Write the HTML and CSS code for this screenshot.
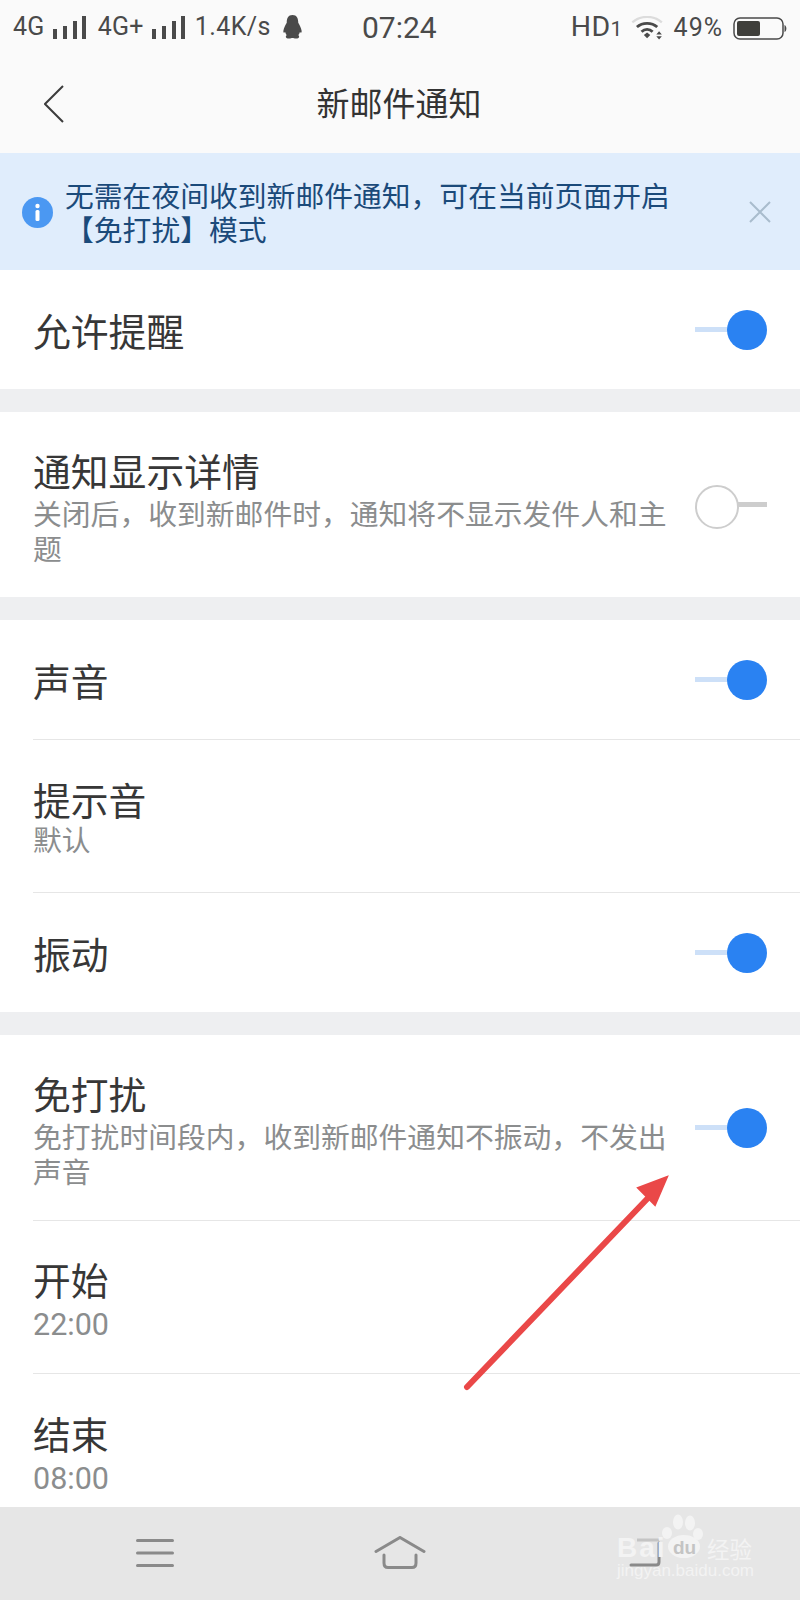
FILE: index.html
```html
<!DOCTYPE html>
<html lang="zh-CN">
<head>
    <meta charset="UTF-8">
    <title>新邮件通知</title>
    <link rel="stylesheet" href="styles.css">
</head>
<body>
<div class="phone">
    <!-- status bar -->
    <div class="status">
        <div class="status-left">
            <span class="net">4G</span>
            <svg class="bars" width="34" height="23" viewBox="0 0 34 23"><path d="M2 13v10M12 10v13M22 5v18M31 0v23" stroke="#4a4a4a" stroke-width="4"/></svg>
            <span class="net net2">4G+</span>
            <svg class="bars" width="34" height="23" viewBox="0 0 34 23"><path d="M2 13v10M12 10v13M22 5v18M31 0v23" stroke="#4a4a4a" stroke-width="4"/></svg>
            <span class="speed">1.4K/s</span>
            <svg class="qq" width="21" height="24" viewBox="0 0 21 25"><path d="M10.500 0C6 0 4.500 3.500 4.500 8C3.500 10 1.500 13 1 16.500C.8 18.500 1.500 19 2.800 17.800C3.200 19.300 3.800 20.300 4.500 21C3 21.800 3 24.500 7 24.500C8.500 24.500 9.500 24 10.500 24C11.500 24 12.500 24.500 14 24.500C18 24.500 18 21.800 16.500 21C17.200 20.300 17.800 19.300 18.200 17.800C19.500 19 20.200 18.500 20 16.500C19.500 13 17.500 10 16.500 8C16.500 3.500 15 0 10.500 0Z" fill="#4a4a4a"/></svg>
        </div>
        <div class="clock">07:24</div>
        <div class="status-right">
            <span class="hd">HD<small>1</small></span>
            <svg class="wifi" width="36" height="24" viewBox="0 0 36 26"><path d="M1 7C10 -1 24 -1 33 7" fill="none" stroke="#dcdcdc" stroke-width="2.500"/><path d="M6 12C12 6.500 22 6.500 28 12M11 17C14.500 13.500 19.500 13.500 23 17" fill="none" stroke="#4a4a4a" stroke-width="3"/><path d="M13.500 20.500L17 18L20.500 20.500L17 24ZM27 20L30 16.500L33 20ZM27 22H33L30 25.500Z" fill="#4a4a4a"/></svg>
            <span class="pct">49%</span>
            <svg class="battery" width="54" height="23" viewBox="0 0 54 23"><rect x="1" y="1" width="49" height="21" rx="6" fill="none" stroke="#4a4a4a" stroke-width="1.500"/><rect x="4" y="4" width="23" height="15" rx="2" fill="#3f3f3b"/><path d="M51.500 8c2.500 1 2.500 6 0 7z" fill="#4a4a4a"/></svg>
        </div>
    </div>

    <!-- title bar -->
    <div class="topbar">
        <svg class="back" width="20" height="38" viewBox="0 0 20 38"><path d="M19 1L1 19L19 37" fill="none" stroke="#3c3c3c" stroke-width="2"/></svg>
        <div class="title">新邮件通知</div>
    </div>

    <div class="banner">
        <svg class="info" width="31" height="31" viewBox="0 0 31 31"><circle cx="15.500" cy="15.500" r="15.500" fill="#4b98f2"/><circle cx="15.500" cy="9" r="2.200" fill="#fff"/><rect x="13.500" y="13" width="4" height="11" rx="1.500" fill="#fff"/></svg>
        <div class="banner-text">无需在夜间收到新邮件通知，可在当前页面开启<br>【免打扰】模式</div>
        <svg class="close" width="22" height="22" viewBox="0 0 22 22"><path d="M1 1L21 21M21 1L1 21" stroke="#a9bccd" stroke-width="2"/></svg>
    </div>

    <div class="group first">
        <div class="row row-plain">
            <div class="label">允许提醒</div>
            <span class="switch on"></span>
        </div>
    </div>

    <div class="group second">
        <div class="row row-detail">
            <div class="row-text">
                <div class="label">通知显示详情</div>
                <div class="sub">关闭后，收到新邮件时，通知将不显示发件人和主题</div>
            </div>
            <span class="switch off"></span>
        </div>
    </div>

    <div class="group">
        <div class="row row-plain line">
            <div class="label">声音</div>
            <span class="switch on"></span>
        </div>
        <div class="row row-value line">
            <div class="row-text">
                <div class="label">提示音</div>
                <div class="sub">默认</div>
            </div>
        </div>
        <div class="row row-plain">
            <div class="label">振动</div>
            <span class="switch on"></span>
        </div>
    </div>

    <div class="group">
        <div class="row row-detail line">
            <div class="row-text">
                <div class="label">免打扰</div>
                <div class="sub">免打扰时间段内，收到新邮件通知不振动，不发出声音</div>
            </div>
            <span class="switch on"></span>
        </div>
        <div class="row row-value row-time line">
            <div class="row-text">
                <div class="label">开始</div>
                <div class="sub time">22:00</div>
            </div>
        </div>
        <div class="row row-value row-time">
            <div class="row-text">
                <div class="label">结束</div>
                <div class="sub time">08:00</div>
            </div>
        </div>
    </div>

    <!-- system navigation -->
    <div class="navbar">
        <svg width="38" height="30" viewBox="0 0 38 30"><path d="M1.500 2.500H36.500M1.500 15H36.500M1.500 27.500H36.500" stroke="#8a8a8a" stroke-width="3" stroke-linecap="round"/></svg>
        <svg width="52" height="34" viewBox="0 0 52 34"><path d="M2 15.500L26 1.500L50 15.500M10 19V27Q10 31.500 14 31.500H38Q42 31.500 42 27V19" fill="none" stroke="#8a8a8a" stroke-width="3" stroke-linecap="round"/></svg>
        <svg width="32" height="30" viewBox="0 0 32 30"><path d="M8 2H30" fill="none" stroke="#c4c4c4" stroke-width="3"/><path d="M30 5V24Q30 27 27 27H2" fill="none" stroke="#8a8a8a" stroke-width="3" stroke-linecap="round"/></svg>
    </div>

    <!-- annotation arrow drawn on the screenshot -->
    <svg class="arrow" width="220" height="230" viewBox="0 0 220 230"><path d="M7 219L188 30" stroke="#ea4848" stroke-width="6" stroke-linecap="round"/><path d="M207 9L178 20L195 37Z" fill="#ea4848" stroke="#ea4848" stroke-width="2"/></svg>

    <!-- watermark -->
    <div class="mark">
        <svg class="paw" width="46" height="50" viewBox="0 0 46 50"><g fill="#f3f3f3"><ellipse cx="7" cy="21" rx="5" ry="6"/><ellipse cx="18" cy="10" rx="5" ry="7.500"/><ellipse cx="30" cy="11" rx="5" ry="7.500"/><ellipse cx="38" cy="22" rx="5" ry="6"/><ellipse cx="24" cy="34.500" rx="16" ry="11.500"/></g></svg>
        <span class="mark-bai">Bai</span>
        <span class="mark-du">du</span>
        <span class="mark-jy">经验</span>
        <span class="mark-url">jingyan.baidu.com</span>
    </div>
</div>
</body>
</html>
```

FILE: styles.css
```css
* {
    box-sizing: border-box;
}
html, body {
    margin: 0;
    padding: 0;
}
body {
    font-family: "Noto Sans CJK SC", "Noto Sans", sans-serif;
    background: #fff;
}
.phone {
    position: relative;
    width: 800px;
    height: 1600px;
    overflow: hidden;
    display: flex;
    flex-direction: column;
    background: #fff;
}

/* status bar */
.status {
    height: 56px;
    flex: none;
    background: #fafafa;
    padding: 12px 13px 0 13px;
    display: flex;
    align-items: flex-start;
    color: #4a4a4a;
    font-family: "Roboto", "Liberation Sans", sans-serif;
    font-size: 25px;
    line-height: 30px;
}
.status-left {
    width: 302px;
    display: flex;
    align-items: center;
}
.net {
    letter-spacing: 0.3px;
}
.status-left .bars {
    margin-left: 8px;
}
.net2 {
    margin-left: 11px;
}
.speed {
    margin-left: 9px;
    letter-spacing: 0.4px;
}
.qq {
    margin-left: 11px;
}
.clock {
    margin-left: 47px;
    font-size: 30px;
    padding-top: 1px;
}
.status-right {
    margin-left: auto;
    display: flex;
    align-items: center;
}
.hd {
    font-size: 28.5px;
    letter-spacing: 0.3px;
}
.hd small {
    font-size: 21px;
}
.wifi {
    margin-left: 7px;
}
.pct {
    margin-left: 8px;
    letter-spacing: 1px;
}
.battery {
    margin-left: 10px;
}

/* title bar */
.topbar {
    height: 97px;
    flex: none;
    background: #fafafa;
    display: flex;
    align-items: center;
    justify-content: center;
    position: relative;
    padding-bottom: 5px;
    padding-right: 2px;
}
.back {
    position: absolute;
    left: 44px;
    top: 29px;
}
.title {
    font-size: 33px;
    line-height: 44px;
    color: #333;
}

/* tip banner */
.banner {
    height: 117px;
    flex: none;
    background: #e0edfc;
    padding: 0 29px 0 22px;
    display: flex;
    align-items: center;
}
.info {
    flex: none;
    margin-top: 2px;
}
.banner-text {
    margin-left: 12px;
    flex: 1;
    font-size: 28.8px;
    line-height: 34px;
    color: #1b4a7a;
}
.close {
    flex: none;
}

/* settings */
.group {
    background: #fff;
    margin-top: 22px;
    padding-left: 33px;
}
.group.first {
    margin-top: 0;
}
.group.second {
    margin-top: 23px;
}
.phone > .group + .group {
    box-shadow: 0 -23px 0 #eeeff1;
}
.row {
    display: flex;
    align-items: center;
    justify-content: space-between;
    padding-right: 33px;
}
.row.line {
    border-bottom: 1px solid #e6e6e6;
}
.row-plain {
    height: 120px;
}
.row-value {
    height: 153px;
}
.row-detail {
    height: 186px;
}
.group.first .row-plain {
    height: 119px;
}
.row-text {
    width: 640px;
}
.row-detail .row-text {
    padding-top: 2px;
}
.row-time .row-text {
    padding-top: 4px;
}
.label {
    font-size: 37.8px;
    line-height: 46px;
    color: #373737;
}
.row-detail .label {
    margin-bottom: 2px;
}
.sub {
    font-size: 28.8px;
    line-height: 34px;
    color: #8b8d8e;
}
.row-detail .sub {
    line-height: 35px;
}
.sub.time {
    font-family: "Roboto", "Liberation Sans", sans-serif;
    font-size: 30.5px;
    padding-top: 6px;
}

/* switches */
.switch {
    position: relative;
    flex: none;
    display: block;
    width: 72px;
    height: 40px;
}
.switch::before {
    content: "";
    position: absolute;
    left: 0;
    right: 10px;
    top: 17px;
    height: 5px;
}
.switch::after {
    content: "";
    position: absolute;
    top: 0;
    width: 40px;
    height: 40px;
    border-radius: 50%;
}
.switch.on::before {
    background: #cde0f8;
}
.switch.on::after {
    right: 0;
    background: #2a82f2;
}
.switch.off::before {
    background: #cdcdcd;
    left: 30px;
    right: 0;
}
.switch.off::after {
    left: 0;
    background: #fff;
    border: 2px solid #cdcdcd;
}

/* bottom navigation */
.navbar {
    position: absolute;
    left: 0;
    right: 0;
    bottom: 0;
    height: 93px;
    padding-bottom: 2px;
    background: #e6e6e6;
    display: grid;
    grid-template-columns: repeat(3, 245px);
    justify-content: center;
    justify-items: center;
    align-items: center;
}

/* overlays */
.arrow {
    position: absolute;
    left: 460px;
    top: 1168px;
}
.mark {
    position: absolute;
    left: 612px;
    top: 1512px;
    width: 146px;
    height: 80px;
    color: #f3f3f3;
    font-family: "Liberation Sans", sans-serif;
}
.paw {
    position: absolute;
    left: 48px;
    top: 0;
}
.mark-bai {
    position: absolute;
    left: 5px;
    top: 18px;
    font-size: 28px;
    font-weight: bold;
    line-height: 36px;
    letter-spacing: 2px;
}
.mark-du {
    position: absolute;
    left: 61px;
    top: 24px;
    font-size: 19px;
    font-weight: bold;
    line-height: 24px;
    color: #c4c4c4;
}
.mark-jy {
    position: absolute;
    left: 95px;
    top: 21px;
    font-family: "Noto Sans CJK SC", sans-serif;
    font-size: 22.5px;
    line-height: 30px;
}
.mark-url {
    position: absolute;
    left: 5px;
    top: 48px;
    font-size: 17px;
    line-height: 22px;
    white-space: nowrap;
}
```
